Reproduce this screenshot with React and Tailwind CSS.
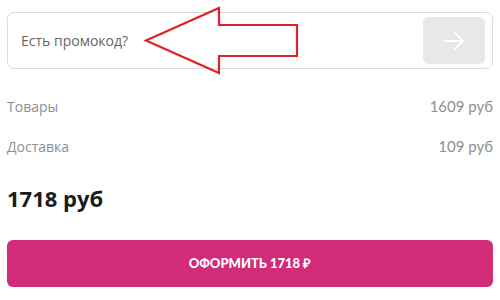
import React from 'react';

const Row = ({ label, value, className = '' }) => (
  <div className={`flex items-center justify-between h-[20px] ${className}`}>
    <span className="text-[14px] text-[#8f8f8f] font-['Open_Sans',sans-serif]">{label}</span>
    <span className="text-[15px] text-[#8f8f8f] font-['Lato',sans-serif]">{value}</span>
  </div>
);

const App = () => {
  return (
    <div className="relative w-[500px] h-[300px] bg-white px-[7px] pt-[12px] overflow-hidden">
      {/* promo field */}
      <div className="flex items-center h-[57px] border border-[#dcdcdc] rounded-[7px] pl-[13px] pr-[7px]">
        <span className="text-[14px] text-[#666] font-['Open_Sans',sans-serif]">Есть промокод?</span>
        <button className="ml-auto w-[62px] h-[47px] bg-[#e8e8e8] rounded-[6px] flex items-center justify-center">
          <svg width="22" height="20" viewBox="0 0 22 20" fill="none" stroke="#fff" strokeWidth="2" strokeLinecap="round" strokeLinejoin="round">
            <path d="M2 10h18M12 2l8 8-8 8" />
          </svg>
        </button>
      </div>

      {/* annotation arrow */}
      <svg className="absolute left-0 top-0 pointer-events-none" width="500" height="80" viewBox="0 0 500 80">
        <path
          d="M146 40.5 L219 8 L219 25 L297 25 L297 56 L219 56 L219 73 Z"
          fill="none"
          stroke="#dd2229"
          strokeWidth="2.2"
          strokeLinejoin="miter"
        />
      </svg>

      <Row label="Товары" value="1609 руб" className="mt-[27px]" />
      <Row label="Доставка" value="109 руб" className="mt-[20px]" />

      <div className="mt-[28px] h-[28px] flex items-center text-[22px] font-bold text-[#1c1c1c] font-['Open_Sans',sans-serif]">
        1718 руб
      </div>

      <button className="mt-[28px] w-full h-[47px] bg-[#d22c79] rounded-[6px] flex items-center justify-center text-white text-[13px] font-black uppercase font-['Lato',sans-serif]">
        Оформить 1718 ₽
      </button>
    </div>
  );
};

export default App;
